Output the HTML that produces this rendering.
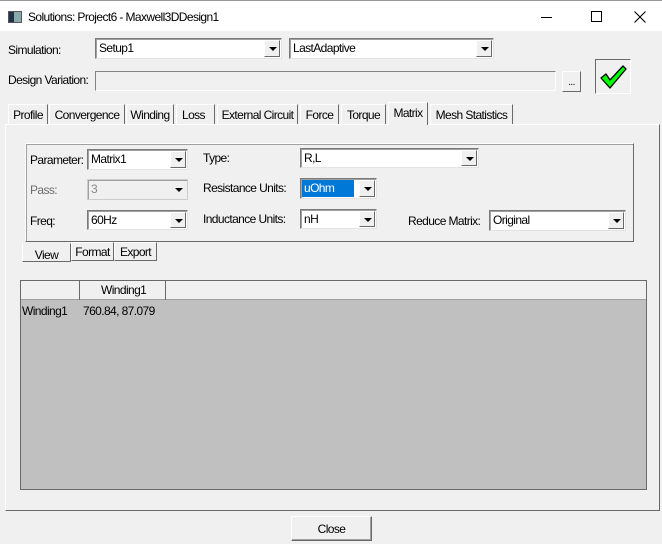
<!DOCTYPE html>
<html><head><style>
*{box-sizing:border-box;margin:0;padding:0}
body{width:662px;height:544px;background:#f0f0f0;font-family:"Liberation Sans",sans-serif;font-size:12px;color:#000;position:relative;overflow:hidden;letter-spacing:-0.6px}
.a{position:absolute;white-space:nowrap}
.combo{position:absolute;background:#fff;border:1px solid #7a7a7a;border-right-color:#e3e3e3;border-bottom-color:#e3e3e3;box-shadow:inset 1px 1px 0 #a0a0a0}
.combo span{position:absolute;left:3px;top:2px}
.combo .btn{position:absolute;right:1px;top:1px;bottom:1px;width:16px;background:#f0f0f0;border:1px solid #fff;border-right-color:#696969;border-bottom-color:#696969}
.combo .btn:after{content:"";position:absolute;left:4px;top:6px;border-left:4px solid transparent;border-right:4px solid transparent;border-top:4px solid #000}
.tab{position:absolute;top:104px;height:20px;border:1px solid #fff;border-right-color:#696969;border-bottom:none;text-align:center;padding-top:3px;background:#f0f0f0}
.stab{position:absolute;height:19px;border:1px solid #fff;border-right-color:#696969;border-bottom-color:#696969;text-align:center;padding-top:2px}
</style></head><body>
<div class="a" style="left:0;top:0;width:662px;height:4px;background:#fff;border-top:1px solid #999"></div>
<div class="a" style="left:0;top:4px;width:662px;height:27px;background:#fff"></div>
<div class="a" style="left:8px;top:11px;width:14px;height:12px;background:#8aa;border:1px solid #556"></div>
<div class="a" style="left:9px;top:12px;width:5px;height:10px;background:#234"></div>
<div class="a" style="left:28px;top:10px;font-size:12px">Solutions: Project6 - Maxwell3DDesign1</div>
<div class="a" style="left:541px;top:17px;width:11px;height:1px;background:#000"></div>
<div class="a" style="left:591px;top:11px;width:11px;height:11px;border:1px solid #000"></div>
<svg class="a" style="left:634px;top:11px" width="12" height="12"><path d="M0.5 0.5L11.5 11.5M11.5 0.5L0.5 11.5" stroke="#000" stroke-width="1.1"/></svg>

<div class="a" style="left:8px;top:43px">Simulation:</div>
<div class="combo" style="left:95px;top:38px;width:187px;height:21px"><span>Setup1</span><div class="btn"></div></div>
<div class="combo" style="left:289px;top:38px;width:205px;height:21px"><span>LastAdaptive</span><div class="btn"></div></div>
<div class="a" style="left:8px;top:73px">Design Variation:</div>
<div class="a" style="left:95px;top:71px;width:461px;height:20px;border:1px solid #838383;border-right-color:#fff;border-bottom-color:#fff;background:#f0f0f0"></div>
<div class="a" style="left:562px;top:71px;width:19px;height:21px;border:1px solid #fff;border-right-color:#696969;border-bottom-color:#696969;text-align:center;font-size:10px;padding-top:5px">...</div>
<div class="a" style="left:595px;top:59px;width:36px;height:35px;border:1px solid #696969;border-right-color:#fff;border-bottom-color:#fff"></div>
<svg class="a" style="left:599px;top:64px" width="28" height="26"><path d="M2 14L7 10L11 16L24 2L27 5L11 24Z" fill="#00ff00" stroke="#000" stroke-width="1.3" stroke-linejoin="round"/></svg>

<div class="a" style="left:5px;top:124px;width:655px;height:387px;border:1px solid #fff;border-right-color:#696969;border-bottom-color:#696969"></div>
<div class="tab" style="left:8px;width:40px">Profile</div>
<div class="tab" style="left:49px;width:76px">Convergence</div>
<div class="tab" style="left:126px;width:48px">Winding</div>
<div class="tab" style="left:176px;width:39px;text-align:left;padding-left:5px">Loss</div>
<div class="tab" style="left:217px;width:81px">External Circuit</div>
<div class="tab" style="left:300px;width:39px">Force</div>
<div class="tab" style="left:341px;width:45px">Torque</div>
<div class="tab" style="left:388px;top:102px;width:40px;height:23px;padding-top:3px;z-index:2">Matrix</div>
<div class="tab" style="left:430px;width:83px">Mesh Statistics</div>

<div class="a" style="left:25px;top:143px;width:609px;height:99px;border:1px solid #fff;border-right-color:#696969;border-bottom-color:#696969;box-shadow:inset 1px 1px 0 #a0a0a0"></div>
<div class="a" style="left:30px;top:153px">Parameter:</div>
<div class="combo" style="left:87px;top:149px;width:101px;height:21px"><span>Matrix1</span><div class="btn"></div></div>
<div class="a" style="left:203px;top:151px">Type:</div>
<div class="combo" style="left:300px;top:148px;width:179px;height:20px"><span>R,L</span><div class="btn"></div></div>
<div class="a" style="left:30px;top:183px;color:#6d6d6d">Pass:</div>
<div class="combo" style="left:87px;top:179px;width:101px;height:21px;background:#f0f0f0;border-color:#ccc"><span style="color:#888">3</span><div class="btn" style="border-color:#f0f0f0"></div></div>
<div class="a" style="left:203px;top:181px">Resistance Units:</div>
<div class="combo" style="left:300px;top:178px;width:77px;height:21px"><div class="a" style="left:1px;top:1px;width:52px;height:17px;background:#0078d7"></div><span style="color:#fff">uOhm</span><div class="btn"></div></div>
<div class="a" style="left:30px;top:214px">Freq:</div>
<div class="combo" style="left:87px;top:210px;width:101px;height:20px"><span>60Hz</span><div class="btn"></div></div>
<div class="a" style="left:203px;top:212px">Inductance Units:</div>
<div class="combo" style="left:300px;top:209px;width:77px;height:20px"><span>nH</span><div class="btn"></div></div>
<div class="a" style="left:408px;top:214px">Reduce Matrix:</div>
<div class="combo" style="left:489px;top:210px;width:137px;height:21px"><span>Original</span><div class="btn"></div></div>

<div class="stab" style="left:22px;top:243px;width:49px;border-top-color:#f0f0f0;border-left-color:#fff;padding-top:4px">View</div>
<div class="stab" style="left:71px;top:242px;width:43px">Format</div>
<div class="stab" style="left:114px;top:242px;width:43px">Export</div>

<div class="a" style="left:20px;top:280px;width:627px;height:210px;background:#c0c0c0;border:1px solid #696969"></div>
<div class="a" style="left:21px;top:281px;width:625px;height:19px;background:#f0f0f0;border-bottom:1px solid #a0a0a0"></div>
<div class="a" style="left:79px;top:281px;width:1px;height:19px;background:#696969"></div>
<div class="a" style="left:165px;top:281px;width:1px;height:19px;background:#696969"></div>
<div class="a" style="left:101px;top:283px">Winding1</div>
<div class="a" style="left:22px;top:304px">Winding1</div>
<div class="a" style="left:83px;top:304px">760.84, 87.079</div>

<div class="a" style="left:291px;top:516px;width:81px;height:25px;border:1px solid #fff;border-right-color:#696969;border-bottom-color:#696969;box-shadow:inset -1px -1px 0 #a0a0a0;text-align:center;padding-top:5px">Close</div>
</body></html>
